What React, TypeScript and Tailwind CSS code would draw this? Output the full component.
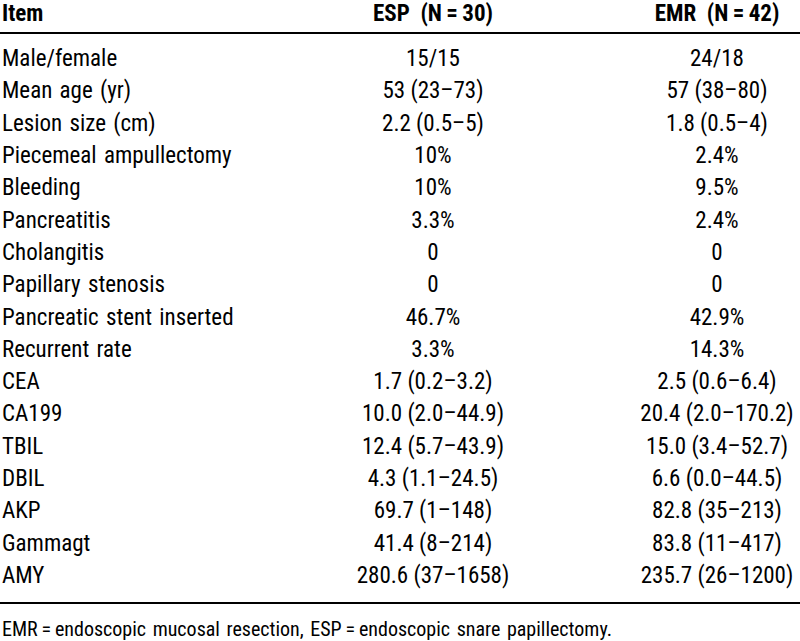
import React from "react";

const rows: [string, string, string][] = [
  ["Male/female", "15/15", "24/18"],
  ["Mean age (yr)", "53 (23–73)", "57 (38–80)"],
  ["Lesion size (cm)", "2.2 (0.5–5)", "1.8 (0.5–4)"],
  ["Piecemeal ampullectomy", "10%", "2.4%"],
  ["Bleeding", "10%", "9.5%"],
  ["Pancreatitis", "3.3%", "2.4%"],
  ["Cholangitis", "0", "0"],
  ["Papillary stenosis", "0", "0"],
  ["Pancreatic stent inserted", "46.7%", "42.9%"],
  ["Recurrent rate", "3.3%", "14.3%"],
  ["CEA", "1.7 (0.2–3.2)", "2.5 (0.6–6.4)"],
  ["CA199", "10.0 (2.0–44.9)", "20.4 (2.0–170.2)"],
  ["TBIL", "12.4 (5.7–43.9)", "15.0 (3.4–52.7)"],
  ["DBIL", "4.3 (1.1–24.5)", "6.6 (0.0–44.5)"],
  ["AKP", "69.7 (1–148)", "82.8 (35–213)"],
  ["Gammagt", "41.4 (8–214)", "83.8 (11–417)"],
  ["AMY", "280.6 (37–1658)", "235.7 (26–1200)"],
];

export default function App() {
  return (
    <div className="w-[800px] h-[641px] bg-white text-black overflow-hidden font-['Roboto_Condensed','Liberation_Sans',sans-serif]">
      {/* header */}
      <div className="flex items-start h-[34px] border-b-2 border-black text-[23px] leading-[27px] font-bold">
        <div className="w-[232px] pl-[2px]">Item</div>
        <div className="w-[402px] text-center whitespace-nowrap">ESP{"\u00a0"} (N{"\u2009"}={"\u2009"}30)</div>
        <div className="flex-1 text-center whitespace-nowrap">EMR{"\u00a0"} (N{"\u2009"}={"\u2009"}42)</div>
      </div>

      {/* body */}
      <div className="pt-[9px] pb-[10px] border-b-2 border-black text-[23px] leading-[30px]">
        {rows.map(([item, esp, emr]) => (
          <div key={item} className="flex items-center h-[32.3px]">
            <div className="w-[232px] pl-[2px] whitespace-nowrap [word-spacing:2px]">{item}</div>
            <div className="w-[402px] text-center whitespace-nowrap">{esp}</div>
            <div className="flex-1 text-center whitespace-nowrap">{emr}</div>
          </div>
        ))}
      </div>

      {/* footnote */}
      <div className="pt-[13px] pl-[2px] text-[20px] leading-[24px] whitespace-nowrap [word-spacing:2px]">
        EMR{"\u2009"}={"\u2009"}endoscopic mucosal resection, ESP{"\u2009"}={"\u2009"}endoscopic snare papillectomy.
      </div>
    </div>
  );
}
